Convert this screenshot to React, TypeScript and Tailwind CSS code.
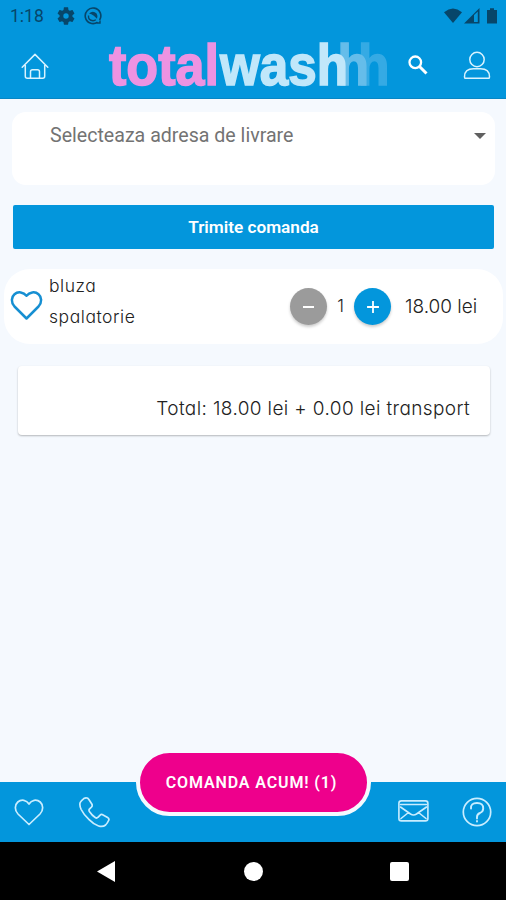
import type { ReactNode } from "react";

interface IconProps {
  className: string;
  viewBox: string;
  stroke?: number;
  children: ReactNode;
}

function Icon({ className, viewBox, stroke = 1.5, children }: IconProps) {
  return (
    <svg
      className={className}
      viewBox={viewBox}
      fill="none"
      stroke="currentColor"
      strokeWidth={stroke}
      strokeLinecap="round"
      strokeLinejoin="round"
    >
      {children}
    </svg>
  );
}

function StatusBar() {
  return (
    <div className="flex h-8 items-center pl-[10px] pr-2 text-[#07466a]">
      <span className="w-[47px] text-[17.5px]">1:18</span>
      <svg className="h-[18px] w-[18px]" viewBox="2 2 20 20" fill="currentColor">
        <path d="M19.14 12.94c.04-.3.06-.61.06-.94 0-.32-.02-.64-.07-.94l2.03-1.58c.18-.14.23-.41.12-.61l-1.92-3.32c-.12-.22-.37-.29-.59-.22l-2.39.96c-.5-.38-1.03-.7-1.62-.94l-.36-2.54c-.04-.24-.24-.41-.48-.41h-3.84c-.24 0-.43.17-.47.41l-.36 2.54c-.59.24-1.13.57-1.62.94l-2.39-.96c-.22-.08-.47 0-.59.22L2.74 8.87c-.12.21-.08.47.12.61l2.03 1.58c-.05.3-.09.63-.09.94s.02.64.07.94l-2.03 1.58c-.18.14-.23.41-.12.61l1.92 3.32c.12.22.37.29.59.22l2.39-.96c.5.38 1.03.7 1.62.94l.36 2.54c.05.24.24.41.48.41h3.84c.24 0 .44-.17.47-.41l.36-2.54c.59-.24 1.13-.56 1.62-.94l2.39.96c.22.08.47 0 .59-.22l1.92-3.32c.12-.22.07-.47-.12-.61l-2.01-1.58zM12 15a3 3 0 1 1 0-6 3 3 0 0 1 0 6z" />
      </svg>
      <svg className="ml-[9px] h-[18px] w-[18px]" viewBox="0 0 18 18" fill="none">
        <path d="M13.5 15.2A7.8 7.8 0 1 1 15.6 13" stroke="currentColor" strokeWidth="1.6" />
        <path d="M5 6.500Q9 2.800 12.600 6.500 14 8.500 13 11.800L9.800 8.800Q7.500 6.800 5 6.500z" fill="currentColor" />
        <path d="M4.500 8.500Q4 13.500 9 13.700 11 13.500 11.800 12.600" stroke="currentColor" strokeWidth="1.4" />
        <path d="M12.500 16h3.500v-2.500" stroke="currentColor" strokeWidth="1.4" />
      </svg>
      <svg className="ml-auto h-4 w-[54px]" viewBox="0 0 54 16" fill="currentColor">
        <path d="M0 4.2Q9-3 18 4.2L9 15z" />
        <path fillRule="evenodd" d="M35.500 0v15.500H20zM30 7v7h3.800V3.500z" />
        <path d="M43 2h3V.3h4V2h3v13.500H43z" />
      </svg>
    </div>
  );
}

function Logo() {
  return (
    <svg
      className="h-[66px] w-[290px]"
      viewBox="0 0 290 66"
      fontFamily="Liberation Sans"
      fontWeight="bold"
      fontSize="58"
      strokeWidth="1.6"
    >
      <text x="7" y="53" textLength="110" lengthAdjust="spacingAndGlyphs" fill="#ed93e2" stroke="#ed93e2">total</text>
      <text x="256" y="53" textLength="31.500" lengthAdjust="spacingAndGlyphs" fill="#35aae4" stroke="#35aae4">h</text>
      <text x="235.500" y="53" textLength="31.500" lengthAdjust="spacingAndGlyphs" fill="#65bdea" stroke="#65bdea">h</text>
      <text x="118" y="53" textLength="128" lengthAdjust="spacingAndGlyphs" fill="#c1e7fa" stroke="#c1e7fa">wash</text>
    </svg>
  );
}

function Header() {
  return (
    <header className="h-[99px] border-b border-[#0786c5] bg-[#0396dc] text-white">
      <StatusBar />
      <div className="flex h-[66px] items-center">
        <Icon className="ml-[21px] mt-[2px] h-[27px] w-[28px] text-[#d9f3ff]" viewBox="0 0 28 27">
          <path d="M1.2 14.3 14 1.4l12.800 12.900M4.300 12v11.200q0 2 2 2h15.400q2 0 2-2V12M9.500 25.200v-6.500q0-2 2-2h5q2 0 2 2v6.500" />
        </Icon>
        <div className="ml-[53px]"><Logo /></div>
        <Icon className="ml-[16px] -mt-[1px] h-5 w-5" viewBox="0 0 20 20" stroke={2.3}>
          <circle cx="7.3" cy="7.3" r="5.8" />
          <path d="M11.500 11.500l7 7" strokeWidth="3" strokeLinecap="butt" />
        </Icon>
        <Icon className="ml-[35px] h-[29px] w-[28px] text-[#d9f3ff]" viewBox="0 0 28 29">
          <circle cx="14" cy="8.500" r="7.200" />
          <path d="M2 27.200q-.5 0-.5-1.500 0-8 9-8h7q9 0 9 8 0 1.500-.5 1.500z" />
        </Icon>
      </div>
    </header>
  );
}

function CartItem() {
  return (
    <section className="ml-1 mr-[3px] mt-5 flex h-[75px] rounded-[26px] bg-white font-['Inter',sans-serif] font-light text-[#222]">
      <Icon className="ml-[6px] mt-[21px] h-[31px] w-[33px] text-[#168fd2]" viewBox="0 0 33 31" stroke={2.5}>
        <path d="M16.500 28.500 4.500 16.500C.8 12.500 1.200 7 4.500 4.200 8.200 1 13.500 2.200 16.500 5.800 19.500 2.200 24.800 1 28.500 4.200 31.800 7 32.200 12.500 28.500 16.500z" />
      </Icon>
      <div className="ml-[6px] mt-px w-[241px] text-[17.5px] leading-[31px] tracking-[0.55px] [font-feature-settings:'cv11']">
        <p>bluza</p>
        <p>spalatorie</p>
      </div>
      <div className="flex h-[37px] items-center self-center">
        <button className="flex h-[37px] w-[37px] items-center justify-center rounded-full bg-[#9b9b9b] shadow-[0_2px_3px_#0003]">
          <span className="h-[2px] w-[11px] bg-white" />
        </button>
        <span className="w-[27px] text-center text-[17px]">1</span>
        <button className="flex h-[37px] w-[37px] items-center justify-center rounded-full bg-[#0396dc] text-white shadow-[0_2px_3px_#0003]">
          <Icon className="h-3 w-3" viewBox="0 0 12 12" stroke={1.8}>
            <path d="M6 .5v11M.5 6h11" />
          </Icon>
        </button>
        <span className="ml-[14px] mt-[2px] text-[19px]">18.00 lei</span>
      </div>
    </section>
  );
}

function BottomBar() {
  return (
    <nav className="relative flex h-[60px] items-center bg-[#0396dc] text-[#c9edff]">
      <Icon className="ml-[14px] h-[27px] w-[30px]" viewBox="0 0 30 27" stroke={1.7}>
        <path d="M15 25.500 4 15C.5 11.500.5 6 3.800 3 7.500-.2 12.500 1 15 5 17.500 1 22.500-.2 26.200 3 29.500 6 29.500 11.500 26 15z" />
      </Icon>
      <Icon className="ml-[35px] h-[31px] w-[31px]" viewBox="0 0 31 31" stroke={1.7}>
        <path d="M7.500.9Q9 .9 9.700 2.300L12.800 7q1 1.800-.4 3.200l-2 1.900q-.8 1 0 2.400 2.500 3.800 5.800 6 1.600 1.100 2.700-.2l2-2q1.400-1.400 3.200-.4l4.500 2.500q2 1.200 1 3.100-1.200 2.700-3 4.500-2.700 2.300-7 1-5-1.600-9.500-6.300Q4.500 17.300 2.200 12.500.2 8 1.200 5.500 2 3.700 4.800 1.600 6.300.7 7.500.9z" />
      </Icon>
      <Icon className="ml-auto -mt-[2px] h-[22px] w-[31px]" viewBox="0 0 31 22" stroke={1.6}>
        <rect x=".9" y=".9" width="29" height="20" rx="2.500" />
        <path d="M2.500 4.500h26M2.500 7l10 7q3 2 6 0l10-7M3 18.500l7.500-6M28 18.500l-7.500-6" />
      </Icon>
      <Icon className="ml-[33px] mr-[14px] h-[30px] w-[30px]" viewBox="0 0 30 30" stroke={1.7}>
        <circle cx="15" cy="15" r="13.700" />
        <path d="M9 11.500Q8.500 6 15 6t6.200 5.500q0 3-3.200 4.500-3 1.200-3 4v1.500M15 24v.6" strokeWidth="1.900" />
      </Icon>
      {/* Order button hangs over the top edge of the bar */}
      <button className="absolute -top-[33px] left-[136px] h-[67px] w-[235px] rounded-full border-4 border-[#f5f9fe] bg-[#ee008c] pr-[4px] text-[16px] font-semibold tracking-[0.88px] text-white">
        COMANDA ACUM! (1)
      </button>
    </nav>
  );
}

export default function App() {
  return (
    <div className="flex h-[900px] w-[506px] flex-col overflow-hidden bg-[#f5f9fe] font-['Roboto',sans-serif]">
      <Header />
      <main className="flex-1">
        <div className="ml-3 mr-[11px] mt-[13px] flex h-[73px] items-start justify-between rounded-[14px] bg-white pl-[38px] pr-[9px] pt-[9px] text-[#737373]">
          <span className="text-[19.6px] leading-[29px]">Selecteaza adresa de livrare</span>
          <svg className="mt-[12px] h-[6px] w-3" viewBox="0 0 12 6" fill="#606060">
            <path d="M0 0h12L6 6z" />
          </svg>
        </div>
        <button className="ml-[13px] mt-5 block h-[44px] w-[481px] rounded-[2px] bg-[#0396dc] pt-px text-[17.2px] font-semibold text-white">
          Trimite comanda
        </button>
        <CartItem />
        <section className="ml-[18px] mr-[16px] mt-[22px] h-[69px] rounded-[4px] bg-white pr-[20px] pt-[28px] text-right font-['Inter',sans-serif] text-[19px] font-light leading-[30px] tracking-[0.38px] text-[#222] shadow-[0_1px_2px_#0004] [font-feature-settings:'cv11']">
          Total: 18.00 lei + 0.00 lei transport
        </section>
      </main>
      <BottomBar />
      <div className="flex h-[58px] items-center bg-black">
        <svg className="ml-[97px] h-[21px] w-[18px]" viewBox="0 0 18 21" fill="white">
          <path d="M18 0v21L0 10.500z" />
        </svg>
        <span className="ml-[129px] h-[19px] w-[19px] rounded-full bg-white" />
        <span className="ml-[127px] h-[19px] w-[19px] rounded-[2px] bg-white" />
      </div>
    </div>
  );
}
